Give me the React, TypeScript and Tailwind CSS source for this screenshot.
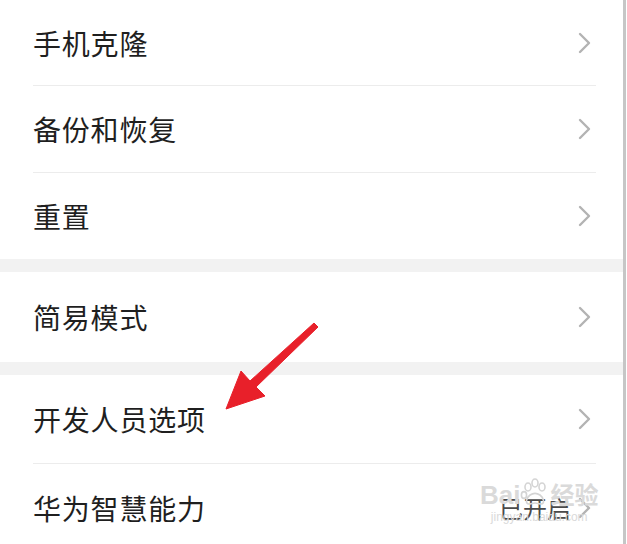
import React from 'react';

const font = { fontFamily: '"Noto Sans CJK SC", "Noto Sans", sans-serif' };

const Chevron: React.FC = () => (
  <svg width="16" height="24" viewBox="0 0 16 24" fill="none" className="shrink-0">
    <path d="M3 3l9 9-9 9" stroke="#b3b3b3" strokeWidth="2.4" strokeLinecap="round" strokeLinejoin="round" />
  </svg>
);

interface RowProps {
  label: string;
  value?: string;
  divider?: boolean;
  height?: string;
}

const Row: React.FC<RowProps> = ({ label, value, divider, height = 'h-[86px]' }) => (
  <div className="shrink-0 bg-white">
    <div className={`flex items-center justify-between pl-[33px] pr-[30px] ${height}`}>
      <span className="text-[28px] leading-none tracking-[0.8px] text-[#1f1f1f]">{label}</span>
      <div className="flex items-center gap-[6px]">
        {value && <span className="text-[24px] leading-none text-[#4a4a4a]">{value}</span>}
        <Chevron />
      </div>
    </div>
    {divider && <div className="ml-[33px] mr-[27px] h-px bg-[#ececec]" />}
  </div>
);

const Paw: React.FC = () => (
  <svg width="30" height="30" viewBox="0 0 30 30" fill="none" stroke="#d4d4d4" strokeWidth="1.6">
    <ellipse cx="8" cy="9" rx="3" ry="4" />
    <ellipse cx="15" cy="5" rx="3" ry="4" />
    <ellipse cx="22" cy="9" rx="3" ry="4" />
    <ellipse cx="4" cy="17" rx="2.6" ry="3.4" />
    <path d="M9 26c-4 0-3-6 1-9 3-2 7-2 10 0 4 3 5 9 1 9-2 0-4-1-6-1s-4 1-6 1z" />
  </svg>
);

export default function App() {
  return (
    <div className="relative flex h-[544px] w-[627px] overflow-hidden bg-white" style={font}>
      <div className="flex w-[623px] shrink-0 flex-col">
        <Row label="手机克隆" divider height="h-[85px]" />
        <Row label="备份和恢复" divider />
        <Row label="重置" height="h-[86px]" />
        <div className="h-[13px] shrink-0 bg-[#f2f2f2]" />
        <Row label="简易模式" height="h-[90px]" />
        <div className="h-[13px] shrink-0 bg-[#f2f2f2]" />
        <Row label="开发人员选项" divider height="h-[88px]" />
        <Row label="华为智慧能力" value="已开启" height="h-[87px]" />
      </div>
      <div className="w-[3px] shrink-0 bg-[#c6c6c6]" />
      <div className="w-px shrink-0 bg-white" />

      {/* red arrow */}
      <svg className="pointer-events-none absolute left-0 top-0" width="627" height="544">
        <polygon
          points="314,323 318,327 256,387 265,396 226,409 241,371 250,381"
          fill="#e8202a"
          stroke="#e8202a"
          strokeWidth="1"
          strokeLinejoin="round"
        />
      </svg>

      {/* watermark */}
      <div className="pointer-events-none absolute left-[480px] top-[478px] flex flex-col items-center leading-none text-[#dadada]">
        <div className="flex items-end" style={{ fontFamily: '"Liberation Sans", "Noto Sans CJK SC", sans-serif' }}>
          <span className="text-[26px] font-bold">Bai</span>
          <Paw />
          <span className="text-[24px] font-bold">经验</span>
        </div>
        <span className="mt-[3px] text-[12px]" style={{ fontFamily: '"Liberation Sans", sans-serif' }}>
          jingyan.baidu.com
        </span>
      </div>
    </div>
  );
}
